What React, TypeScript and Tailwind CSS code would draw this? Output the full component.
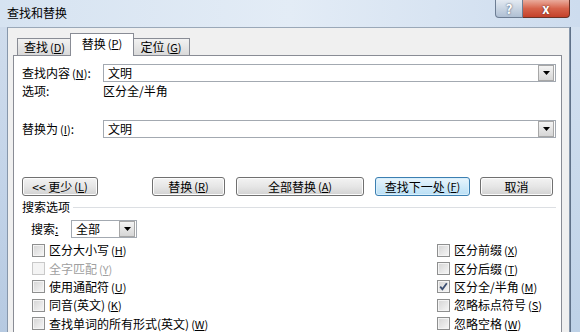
import clsx from 'clsx'

const FONT = "font-['Noto_Sans_CJK_SC','Liberation_Sans',sans-serif]"

function Key({ k }: { k: string }) {
  return (
    <span className="ml-[2px] text-[11px]">
      (<span className="underline underline-offset-[1px]">{k}</span>)
    </span>
  )
}

function ArrowBtn() {
  return (
    <span className="flex size-[16px] items-center justify-center border border-[#a7a7a7] bg-gradient-to-b from-[#f4f4f4] to-[#d6d6d6]">
      <svg width="7" height="4" viewBox="0 0 7 4">
        <path d="M0 0h7L3.5 4z" fill="#000" />
      </svg>
    </span>
  )
}

function Combo({ value, w }: { value: string; w: string }) {
  return (
    <div className={clsx('flex h-[18px] items-center border border-[#a3a9b1] bg-white pl-[4px] pr-[1px]', w)}>
      <span className="flex-1 leading-none">{value}</span>
      <ArrowBtn />
    </div>
  )
}

function Btn({ label, w, focus }: { label: React.ReactNode; w: string; focus?: boolean }) {
  return (
    <div
      className={clsx(
        'flex h-[19px] items-center justify-center rounded-[3px] border leading-none',
        w,
        focus
          ? 'border-[#3c7fb1] bg-gradient-to-b from-[#e9f5fc] to-[#b9dff5] shadow-[inset_0_0_0_1px_#d8effc]'
          : 'border-[#707070] bg-gradient-to-b from-[#f3f3f3] via-[#e6e6e6] to-[#d2d2d2] shadow-[inset_0_0_0_1px_#fcfcfc]',
      )}
    >
      {label}
    </div>
  )
}

function Check({ label, checked, disabled }: { label: React.ReactNode; checked?: boolean; disabled?: boolean }) {
  return (
    <div className={clsx('flex h-[18.4px] items-center', disabled && 'text-[#a0a0a0]')}>
      <span
        className={clsx(
          'flex size-[13px] items-center justify-center border',
          disabled
            ? 'border-[#c9c9c9] bg-[#f4f4f4]'
            : 'border-[#8e8f8f] bg-gradient-to-br from-[#d4d4d4] to-[#f7f7f7] shadow-[inset_0_0_0_1px_#f4f4f4]',
        )}
      >
        {checked && (
          <svg width="9" height="9" viewBox="0 0 9 9">
            <path d="M1.2 4.6 3.4 7.2 7.8 1.2" fill="none" stroke="#3b4f72" strokeWidth="1.8" />
          </svg>
        )}
      </span>
      <span className="ml-[4px] leading-none">{label}</span>
    </div>
  )
}

export default function App() {
  return (
    <div className={clsx('flex h-[332px] w-[580px] flex-col overflow-hidden text-[12px] text-black', FONT)}>
      {/* title bar */}
      <div className="flex h-[27px] shrink-0 bg-gradient-to-r from-[#d6e3f1] via-[#e3ecf6] to-[#cddcee]">
        <span className="ml-[7px] mt-[5px] leading-[16px]">查找和替换</span>
        <div className="ml-auto mr-[10px] flex h-[18px]">
          <div className="flex w-[28px] items-center justify-center rounded-bl-[4px] border border-t-0 border-[#6c7d93] bg-gradient-to-b from-[#e3eaf2] to-[#afbfd3] text-[13px] font-bold text-white [text-shadow:0_0_2px_#2c3c55]">
            ?
          </div>
          <div className="flex w-[47px] items-center justify-center rounded-br-[4px] border border-l-0 border-t-0 border-[#6b3226] bg-gradient-to-b from-[#e9ab9c] via-[#d6634b] to-[#c4412a] text-[13px] font-bold text-white [text-shadow:0_0_2px_#4a1a12]">
            x
          </div>
        </div>
      </div>

      <div className="flex flex-1">
        <div className="w-[7px] bg-gradient-to-b from-[#cfdcec] via-[#c2d3e8] to-[#b4c8e0]" />
        <div className="w-[563px] border-x border-t border-x-[#8797ab] border-t-[#9aa8b8] bg-[#f0f0f0] pt-[5px]">
          {/* tabs */}
          <div className="ml-[5px] flex h-[22px] items-end">
            <div className="ml-[4px] flex h-[17px] w-[55px] items-center justify-center border border-b-0 border-[#898c95] bg-gradient-to-b from-[#f2f2f2] to-[#dadada] leading-none">
              查找<Key k="D" />
            </div>
            <div className="relative z-10 -mx-[2px] -mb-[1px] flex h-[23px] w-[64px] items-center justify-center border border-b-0 border-[#898c95] bg-white pb-[3px] leading-none">
              替换<Key k="P" />
            </div>
            <div className="flex h-[17px] w-[58px] items-center justify-center border border-b-0 border-[#898c95] bg-gradient-to-b from-[#f2f2f2] to-[#dadada] leading-none">
              定位<Key k="G" />
            </div>
          </div>

          {/* panel */}
          <div className="ml-[5px] h-[300px] w-[549px] border border-[#898c95] bg-white pl-[8px] pr-[5px]">
            <div className="mt-[8px] flex h-[18px] items-center">
              <span className="w-[81px] leading-none">
                查找内容<Key k="N" />:
              </span>
              <Combo value="文明" w="w-[453px]" />
            </div>
            <div className="mt-[1px] flex h-[16px] items-center">
              <span className="w-[81px] leading-none">选项:</span>
              <span className="leading-none">区分全/半角</span>
            </div>
            <div className="mt-[21px] flex h-[18px] items-center">
              <span className="w-[81px] leading-none">
                替换为<Key k="I" />:
              </span>
              <Combo value="文明" w="w-[453px]" />
            </div>

            <div className="mt-[39px] flex">
              <Btn w="w-[76px]" label={<>&lt;&lt; 更少<Key k="L" /></>} />
              <div className="ml-[54px]">
                <Btn w="w-[73px]" label={<>替换<Key k="R" /></>} />
              </div>
              <div className="ml-[11px]">
                <Btn w="w-[128px]" label={<>全部替换<Key k="A" /></>} />
              </div>
              <div className="ml-[11px]">
                <Btn w="w-[95px]" focus label={<>查找下一处<Key k="F" /></>} />
              </div>
              <div className="ml-[10px]">
                <Btn w="w-[73px]" label="取消" />
              </div>
            </div>

            <div className="mt-[3px] flex h-[16px] items-center">
              <span className="leading-none">搜索选项</span>
              <div className="ml-[3px] h-px flex-1 bg-[#dcdfe3]" />
            </div>

            <div className="mt-[5px] flex h-[18px] items-center pl-[9px]">
              <span className="w-[40px] leading-none">
                搜索<span className="underline">:</span>
              </span>
              <Combo value="全部" w="w-[66px]" />
            </div>

            <div className="mt-[3px] flex pl-[10px]">
              <div className="w-[405px]">
                <Check label={<>区分大小写<Key k="H" /></>} />
                <Check disabled label={<>全字匹配<Key k="Y" /></>} />
                <Check label={<>使用通配符<Key k="U" /></>} />
                <Check label={<>同音(英文)<Key k="K" /></>} />
                <Check label={<>查找单词的所有形式(英文)<Key k="W" /></>} />
              </div>
              <div>
                <Check label={<>区分前缀<Key k="X" /></>} />
                <Check label={<>区分后缀<Key k="T" /></>} />
                <Check checked label={<>区分全/半角<Key k="M" /></>} />
                <Check label={<>忽略标点符号<Key k="S" /></>} />
                <Check label={<>忽略空格<Key k="W" /></>} />
              </div>
            </div>
          </div>
        </div>
        <div className="w-[10px] border-l border-[#5f7188] bg-gradient-to-b from-[#d4e1f0] to-[#bcd0e6]" />
      </div>
    </div>
  )
}
